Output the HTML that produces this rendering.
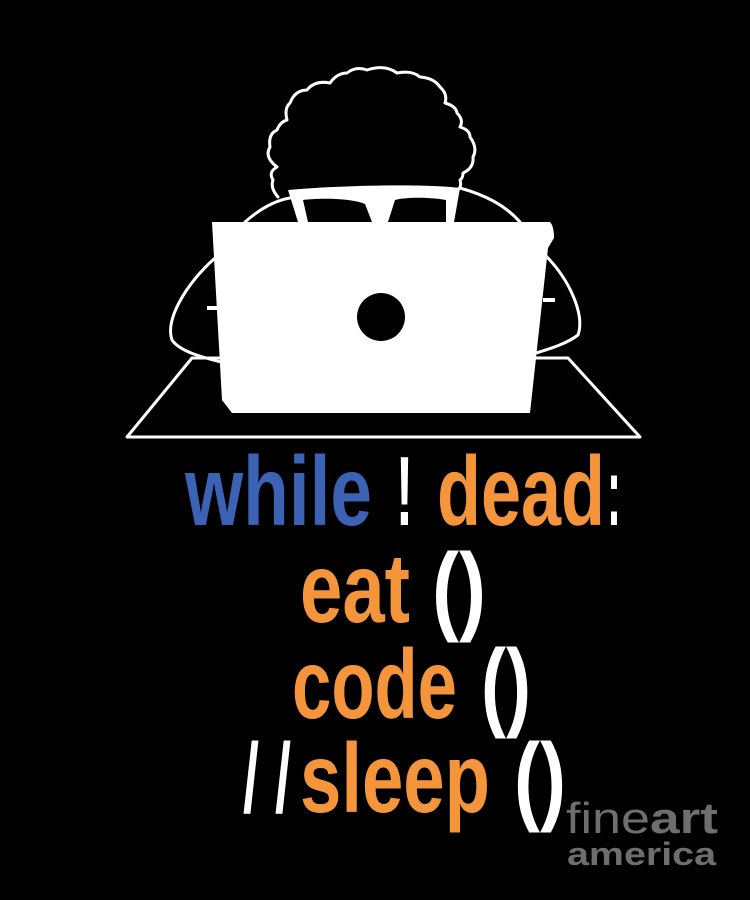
<!DOCTYPE html>
<html><head><meta charset="utf-8"><style>
html,body{margin:0;padding:0;background:#000;width:750px;height:900px;overflow:hidden}
svg{display:block}
text{font-family:"Liberation Sans Narrow","Liberation Sans",sans-serif;font-weight:bold}
</style></head><body>
<svg width="750" height="900" viewBox="0 0 750 900">
<rect width="750" height="900" fill="#000"/>
<g fill="none" stroke="#fff" stroke-width="3" stroke-linejoin="round" stroke-linecap="round">
<!-- desk -->
<path d="M192 358 L568 358 L640 437 L127 437 Z"/>
<!-- arms -->
<path d="M215 258 C185 285 165 320 172 340 C180 352 205 358 225 363"/>
<path d="M545 255 C570 280 585 315 578 335 C565 345 545 350 530 355"/>
<!-- shoulders -->
<path d="M245 222 C262 207 278 200 290 198"/>
<path d="M460 188 C485 195 505 205 520 222"/>
<!-- hair -->
<path d="M278 197 Q270 188 273 180 Q268 172 277 167 Q264 157 270 147 Q268 134 277 130 Q280 122 287 120 Q284 108 290 103 Q295 90 307 90 Q315 80 330 83 Q337 73 347 73 Q356 66 367 70 Q385 64 397 73 Q412 70 420 77 Q434 78 440 87 Q448 94 445 103 Q456 106 457 113 Q464 120 460 127 Q470 130 470 137 Q478 148 473 157 Q474 168 463 173 Q463 178 460 180 Q462 186 458 190"/>
</g>
<!-- glasses -->
<path d="M288 190 C330 186 420 183 460 188 L454 222 L446 222 L446 200 C430 197 405 197 395 200 L388 222 L372 222 L365 204 C350 198 320 198 303 200 L308 222 L298 222 Z" fill="#fff"/>
<!-- laptop -->
<path d="M212 222 L550 222 Q554 226 554 238 L548 248 L530 413 L232 413 L222 400 Z" fill="#fff"/>
<rect x="207" y="306" width="12" height="4" fill="#fff"/>
<rect x="543" y="298" width="12" height="4" fill="#fff"/>
<circle cx="381" cy="317" r="24" fill="#000"/>

<!-- code text -->
<g font-size="98">
<text x="185" y="525" fill="#3b62b5" textLength="187" lengthAdjust="spacingAndGlyphs">while</text>
<text x="396" y="525" fill="#fff" textLength="17" lengthAdjust="spacingAndGlyphs">!</text>
<text x="437" y="525" fill="#f5953b" textLength="168" lengthAdjust="spacingAndGlyphs">dead</text>
<text x="607" y="525" fill="#fff" textLength="14" lengthAdjust="spacingAndGlyphs">:</text>

<text x="300" y="622" fill="#f5953b" textLength="110" lengthAdjust="spacingAndGlyphs">eat</text>
<text x="432" y="622" fill="#fff" textLength="54" lengthAdjust="spacingAndGlyphs">()</text>

<text x="292" y="718" fill="#f5953b" textLength="165" lengthAdjust="spacingAndGlyphs">code</text>
<text x="481" y="718" fill="#fff" textLength="50" lengthAdjust="spacingAndGlyphs">()</text>

<text x="243" y="812" fill="#fff" textLength="48" lengthAdjust="spacingAndGlyphs">/ /</text>
<text x="300" y="812" fill="#f5953b" textLength="190" lengthAdjust="spacingAndGlyphs">sleep</text>
<text x="514" y="812" fill="#fff" textLength="52" lengthAdjust="spacingAndGlyphs">()</text>
</g>

<!-- watermark -->
<text x="566" y="833" fill="#6e6e6e" font-size="44" font-family="Liberation Sans, sans-serif" textLength="84" lengthAdjust="spacingAndGlyphs" style="font-weight:normal">fine</text>
<text x="650" y="833" fill="#6e6e6e" font-size="44" font-family="Liberation Sans, sans-serif" textLength="68" lengthAdjust="spacingAndGlyphs">art</text>
<text x="567" y="865" fill="#6e6e6e" font-size="32" font-family="Liberation Sans, sans-serif" textLength="149" lengthAdjust="spacingAndGlyphs">america</text>
</svg>
</body></html>
